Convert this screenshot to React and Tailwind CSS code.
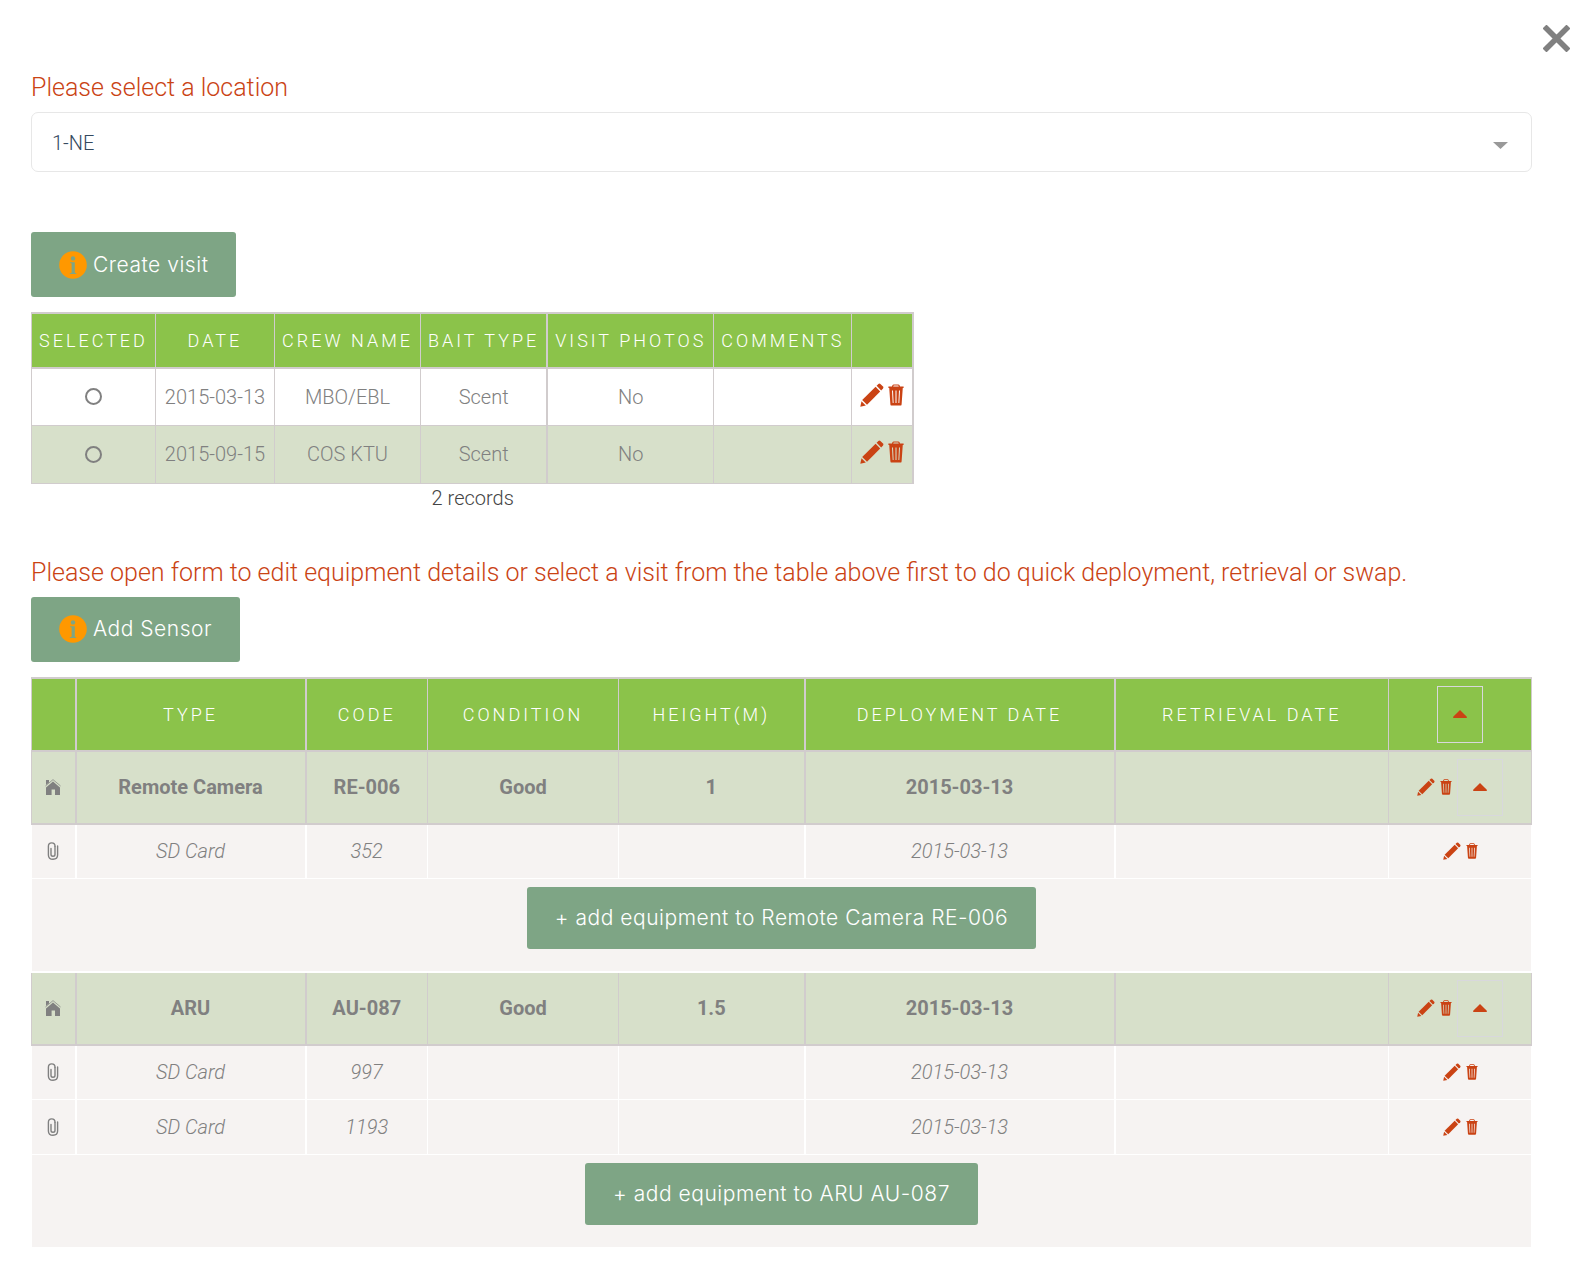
import React, { useState } from "react";

const LOCATIONS = ["1-NE"];

const VISITS = [
  { id: 1, date: "2015-03-13", crew: "MBO/EBL", bait: "Scent", photos: "No", comments: "" },
  { id: 2, date: "2015-09-15", crew: "COS KTU", bait: "Scent", photos: "No", comments: "" },
];

const SENSORS = [
  {
    type: "Remote Camera",
    code: "RE-006",
    condition: "Good",
    height: "1",
    deployed: "2015-03-13",
    retrieved: "",
    equipment: [{ type: "SD Card", code: "352", deployed: "2015-03-13" }],
  },
  {
    type: "ARU",
    code: "AU-087",
    condition: "Good",
    height: "1.5",
    deployed: "2015-03-13",
    retrieved: "",
    equipment: [
      { type: "SD Card", code: "997", deployed: "2015-03-13" },
      { type: "SD Card", code: "1193", deployed: "2015-03-13" },
    ],
  },
];

function PencilIcon({ className }) {
  return (
    <svg viewBox="0 0 24 24" fill="currentColor" className={className} aria-hidden="true">
      <path d="M.3 23.7 1.5 18.2 5.8 22.5Z" />
      <path d="M2.2 17 15.6 3.8 20.2 8.4 7 21.8Z" />
      <path d="M16.6 2.8 18.4 1Q19.4.1 20.4 1L23 3.6Q23.9 4.6 23 5.6L21.2 7.4Z" />
    </svg>
  );
}

function TrashIcon({ className }) {
  return (
    <svg viewBox="0 0 16 22" fill="currentColor" className={className} aria-hidden="true">
      <path d="M4 2.6Q4.3.4 5.6.4H10.4Q11.7.4 12 2.6H15.6V4H.4V2.6ZM5.2 2.6H10.8Q10.6 1.5 10 1.5H6Q5.4 1.5 5.2 2.6Z" />
      <path
        fillRule="evenodd"
        d="M1.2 3.6H14.8L13.6 20.4Q13.5 21.6 12.2 21.6H3.8Q2.5 21.6 2.4 20.4ZM4 6.4 4.7 19H5.6L5 6.4ZM7.5 6.4V19H8.5V6.4ZM11 6.4 10.4 19H11.3L12 6.4Z"
      />
    </svg>
  );
}

function HomeIcon() {
  return (
    <svg viewBox="0 0 16 16" fill="#808080" className="mx-auto block h-4 w-4" aria-hidden="true">
      <path d="M8 2.4 15 8.4V16H10V10.6H6.6V16H1V8.4Z" />
      <path d="M1 1H4V3.6L1 6Z" />
      <path d="M.4 7 8 .6 15.6 7" fill="none" stroke="#808080" strokeWidth=".7" />
    </svg>
  );
}

function PaperclipIcon() {
  return (
    <svg
      viewBox="0 0 12 18"
      fill="none"
      stroke="#808080"
      strokeWidth="1.4"
      strokeLinecap="round"
      className="mx-auto block h-[18px] w-3"
      aria-hidden="true"
    >
      <path d="M8 4.4V12.4Q8 14.2 6 14.2T4 12.4V6.4" />
      <path d="M10.6 4V13Q10.6 17.2 6 17.2T1.4 13V4.2Q1.4.9 4.7.9T8 4.2" />
    </svg>
  );
}

function CaretUpIcon() {
  return (
    <svg viewBox="0 0 14 8" fill="#ca4314" className="h-2 w-3.5" aria-hidden="true">
      <path d="M7 0 13.8 6.8V8H.2V6.8Z" />
    </svg>
  );
}

function InfoIcon() {
  return (
    <svg viewBox="0 0 28 28" className="h-7 w-7" aria-hidden="true">
      <circle cx="14" cy="14" r="13.8" fill="#ff9800" />
      <circle cx="14" cy="7.4" r="2.2" fill="#7ea585" />
      <path d="M11 11.2H15.8V21.4Q15.8 22 17.2 22.2V23H10.8V22.2Q12.6 22 12.6 21.4V12.8Q12.6 12 11 12Z" fill="#7ea585" />
    </svg>
  );
}

function ActionButton({ icon, className, children }) {
  return (
    <button
      type="button"
      className={`inline-flex items-center gap-1.5 rounded-[3px] bg-[#7ea585] px-7 font-[Inter,sans-serif] text-[21px] font-light tracking-wide text-white ${className}`}
    >
      {icon}
      <span>{children}</span>
    </button>
  );
}

function RowActions({ small }) {
  return (
    <>
      <button type="button" aria-label="Edit" className="text-[#ca4314]">
        <PencilIcon className={small ? "h-[18px] w-[18px]" : "h-6 w-6"} />
      </button>
      <button type="button" aria-label="Delete" className="text-[#ca4314]">
        <TrashIcon className={small ? "h-4 w-3" : "h-[22px] w-4"} />
      </button>
    </>
  );
}

function CollapseButton({ onClick, className }) {
  return (
    <button
      type="button"
      aria-label="Toggle equipment"
      onClick={onClick}
      className={`inline-flex h-[57px] w-[46px] items-center justify-center border ${className}`}
    >
      <CaretUpIcon />
    </button>
  );
}

function VisitTable() {
  const [selected, setSelected] = useState(null);
  const cell = "border border-[#d1cccd]";
  const head = `${cell} border-y-2 px-[7px] text-[18px] font-light tracking-[3px] whitespace-nowrap`;

  return (
    <table className="mt-[15px] border-collapse text-center text-[20px] text-[#808080]">
      <caption className="caption-bottom leading-7 text-[#444]">{VISITS.length} records</caption>
      <thead>
        <tr className="h-[55px] bg-[#8bc34a] text-white">
          <th className={head}>SELECTED</th>
          <th className={head}>DATE</th>
          <th className={head}>CREW NAME</th>
          <th className={`${head} border-r-2`}>BAIT TYPE</th>
          <th className={head}>VISIT PHOTOS</th>
          <th className={head}>COMMENTS</th>
          <th className={`${head} border-r-2`}></th>
        </tr>
      </thead>
      <tbody>
        {VISITS.map((visit) => (
          <tr key={visit.id} className="h-[57px] even:h-[58px] even:bg-[#d7e0ca]">
            <td className={cell}>
              <input
                type="radio"
                name="visit"
                aria-label={`Select visit ${visit.date}`}
                checked={selected === visit.id}
                onChange={() => setSelected(visit.id)}
                className="mx-auto block h-[17px] w-[17px] appearance-none rounded-full border-2 border-[#808080] checked:bg-[#808080]"
              />
            </td>
            <td className={`${cell} px-[9px]`}>{visit.date}</td>
            <td className={cell}>{visit.crew}</td>
            <td className={`${cell} border-r-2`}>{visit.bait}</td>
            <td className={cell}>{visit.photos}</td>
            <td className={cell}>{visit.comments}</td>
            <td className={`${cell} border-r-2 px-2`}>
              <div className="flex items-center gap-1 pb-1">
                <RowActions />
              </div>
            </td>
          </tr>
        ))}
      </tbody>
    </table>
  );
}

function SensorRows({ sensor, open, onToggle }) {
  const cell = "border border-[#d1cccd]";
  const sub = "border border-white";

  return (
    <>
      <tr className="h-[73px] border-b-2 border-[#d1cccd] bg-[#d7e0ca] font-bold">
        <td className={`${cell} border-r-2`}>
          <HomeIcon />
        </td>
        <td className={`${cell} border-r-2`}>{sensor.type}</td>
        <td className={cell}>{sensor.code}</td>
        <td className={cell}>{sensor.condition}</td>
        <td className={`${cell} border-r-2`}>{sensor.height}</td>
        <td className={`${cell} border-r-2`}>{sensor.deployed}</td>
        <td className={cell}>{sensor.retrieved}</td>
        <td className={cell}>
          <div className="flex items-center justify-center gap-[5px]">
            <RowActions small />
            <CollapseButton onClick={onToggle} className="border-[#d8d8dc]" />
          </div>
        </td>
      </tr>
      {open &&
        sensor.equipment.map((item) => (
          <tr key={item.code} className="h-[55px] bg-[#f6f3f2] italic">
            <td className={`${sub} border-r-2`}>
              <PaperclipIcon />
            </td>
            <td className={`${sub} border-r-2`}>{item.type}</td>
            <td className={sub}>{item.code}</td>
            <td className={sub}></td>
            <td className={`${sub} border-r-2`}></td>
            <td className={`${sub} border-r-2`}>{item.deployed}</td>
            <td className={sub}></td>
            <td className={sub}>
              <div className="flex items-center justify-center gap-[5px]">
                <RowActions small />
              </div>
            </td>
          </tr>
        ))}
      {open && (
        <tr className="h-[93px] bg-[#f6f3f2]">
          <td colSpan={8} className={`${sub} border-b-2 pt-2 align-top`}>
            <ActionButton className="h-[62px]">
              + add equipment to {sensor.type} {sensor.code}
            </ActionButton>
          </td>
        </tr>
      )}
    </>
  );
}

function SensorTable() {
  const [closed, setClosed] = useState([]);
  const head = "border border-y-2 border-[#d1cccd] text-[18px] font-light tracking-[3px]";

  const toggle = (code) =>
    setClosed((prev) =>
      prev.includes(code) ? prev.filter((c) => c !== code) : [...prev, code]
    );
  const toggleAll = () =>
    setClosed((prev) => (prev.length ? [] : SENSORS.map((s) => s.code)));

  return (
    <table className="mt-[15px] w-full table-fixed border-collapse text-center text-[20px] text-[#808080]">
      <colgroup>
        <col className="w-[44px]" />
        <col className="w-[230px]" />
        <col className="w-[122px]" />
        <col className="w-[191px]" />
        <col className="w-[186px]" />
        <col className="w-[310px]" />
        <col className="w-[274px]" />
        <col className="w-[143px]" />
      </colgroup>
      <thead>
        <tr className="h-[73px] bg-[#8bc34a] text-white">
          <th className={`${head} border-r-2`}></th>
          <th className={`${head} border-r-2`}>TYPE</th>
          <th className={head}>CODE</th>
          <th className={head}>CONDITION</th>
          <th className={`${head} border-r-2`}>HEIGHT(M)</th>
          <th className={`${head} border-r-2`}>DEPLOYMENT DATE</th>
          <th className={head}>RETRIEVAL DATE</th>
          <th className={head}>
            <CollapseButton onClick={toggleAll} className="border-[#d8d8dc]" />
          </th>
        </tr>
      </thead>
      <tbody>
        {SENSORS.map((sensor) => (
          <SensorRows
            key={sensor.code}
            sensor={sensor}
            open={!closed.includes(sensor.code)}
            onToggle={() => toggle(sensor.code)}
          />
        ))}
      </tbody>
    </table>
  );
}

export default function App() {
  const [location, setLocation] = useState(LOCATIONS[0]);

  return (
    <div className="bg-white pb-5 font-[Roboto,sans-serif] font-light">
      <div className="flex justify-end pt-[25px] pr-[18px]">
        <button type="button" aria-label="Close" className="text-[#808080]">
          <svg viewBox="0 0 27 27" className="h-[27px] w-[27px]" aria-hidden="true">
            <path
              d="M3.5 3.5 23.5 23.5M23.5 3.5 3.5 23.5"
              fill="none"
              stroke="currentColor"
              strokeWidth="5.6"
              strokeLinecap="square"
            />
          </svg>
        </button>
      </div>

      <main className="pr-14 pl-[31px]">
        <label htmlFor="location" className="mt-4 block text-[25px] leading-10 text-[#ca4314]">
          Please select a location
        </label>
        <div className="relative mt-1">
          <select
            id="location"
            value={location}
            onChange={(e) => setLocation(e.target.value)}
            className="block h-[60px] w-full appearance-none rounded-[7px] border border-[#e7e7e7] bg-white px-5 pt-0.5 text-[20px] text-[#34495e]"
          >
            {LOCATIONS.map((name) => (
              <option key={name}>{name}</option>
            ))}
          </select>
          <svg
            viewBox="0 0 15 7"
            fill="#999"
            className="pointer-events-none absolute top-[30px] right-6 h-[7px] w-[15px]"
            aria-hidden="true"
          >
            <path d="M0 0H15L7.5 7Z" />
          </svg>
        </div>

        <ActionButton icon={<InfoIcon />} className="mt-[60px] h-[65px]">
          Create visit
        </ActionButton>
        <VisitTable />

        <p className="mt-[41px] text-[25px] leading-10 text-[#ca4314]">
          Please open form to edit equipment details or select a visit from the table above first to
          do quick deployment, retrieval or swap.
        </p>
        <ActionButton icon={<InfoIcon />} className="mt-1 h-[65px]">
          Add Sensor
        </ActionButton>
        <SensorTable />
      </main>
    </div>
  );
}
